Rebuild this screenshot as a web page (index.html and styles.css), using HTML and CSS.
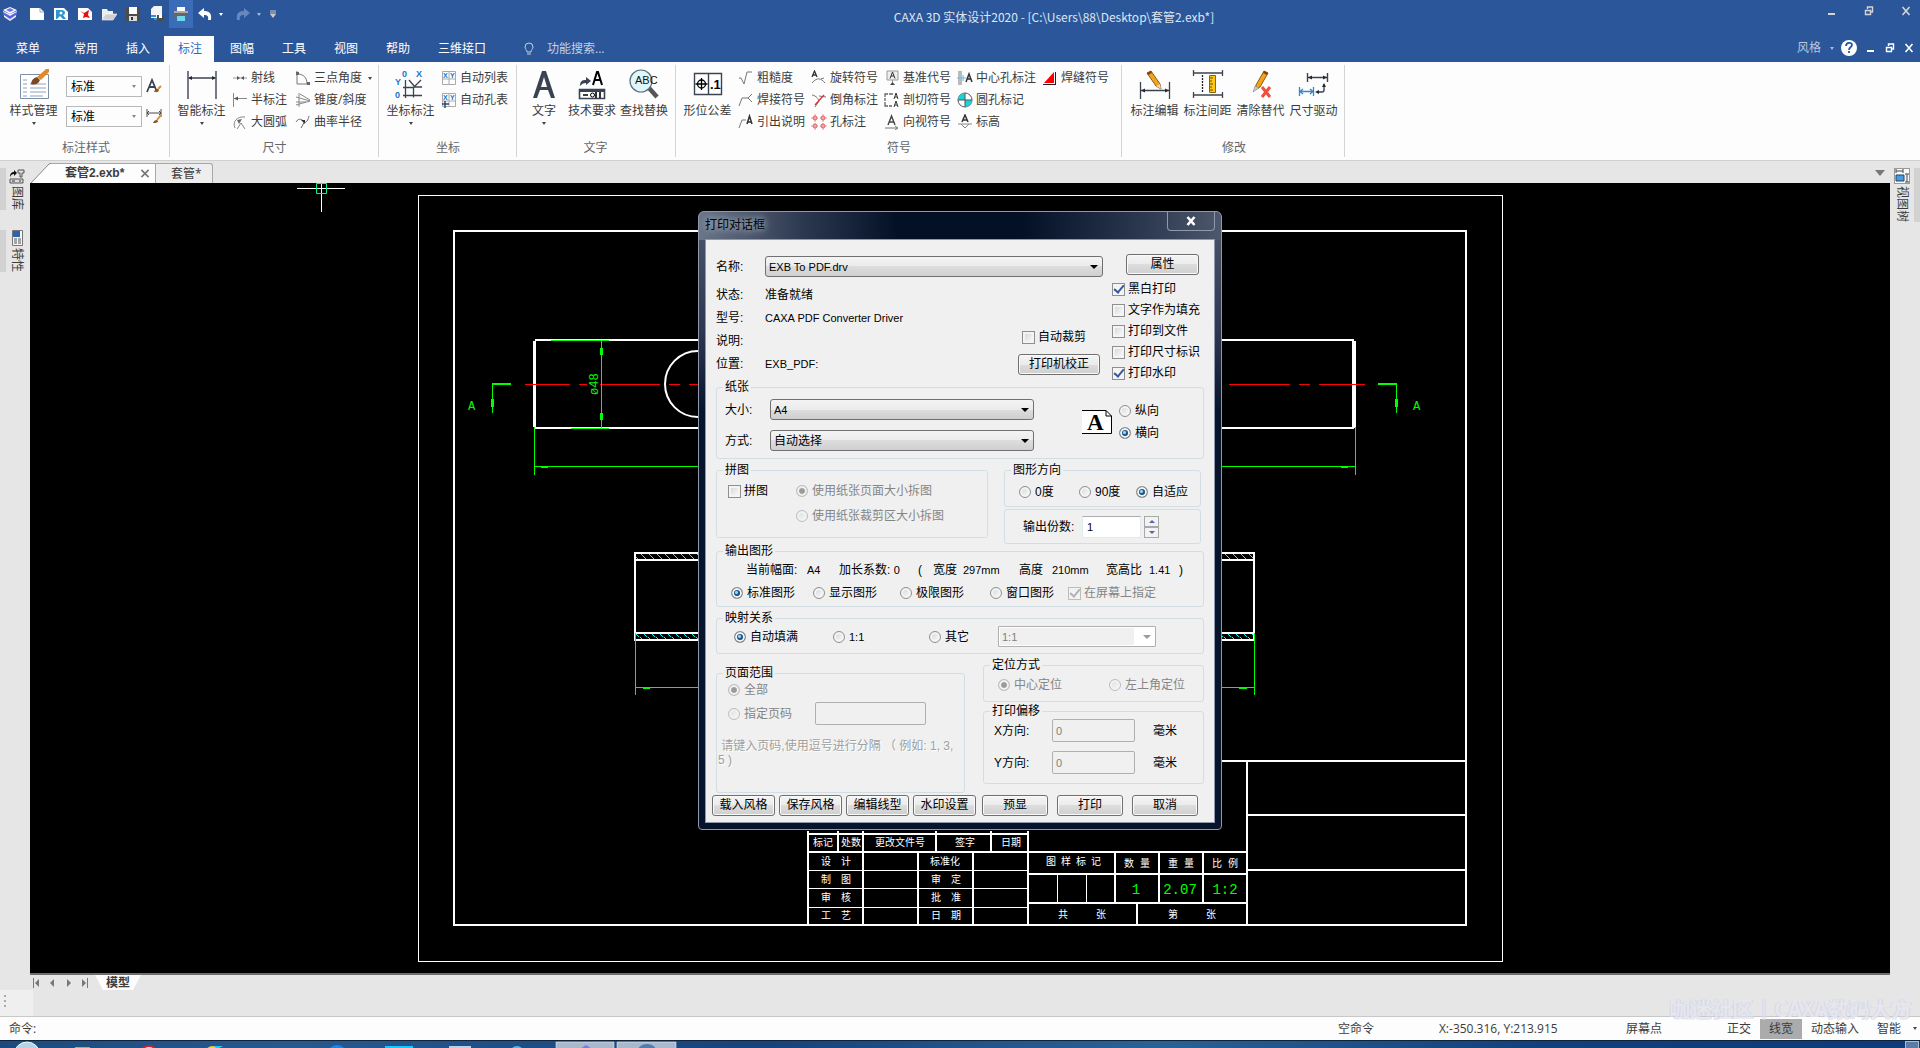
FILE: index.html
```html
<!DOCTYPE html>
<html lang="zh-CN">
<head>
<meta charset="utf-8">
<title>CAXA 3D 实体设计2020</title>
<link rel="stylesheet" href="styles.css">
</head>
<body>
<header class="header">
  <div class="titlebar">
    <div class="quick">
      <svg class="logo" viewBox="0 0 16 16"><path d="M1 4 8 1l7 3-7 4z" fill="#fff"/><path d="M4 4l4-2 4 2-4 2z" fill="#6d74ef"/><path d="M1 6l7 4 7-4v3l-7 4-7-4z" fill="#5a60e6"/><path d="M1 5v1l7 4 7-4v-1l-7 3zM2 9l6 4 6-4v2l-6 4-6-4z" fill="#e9ebff"/></svg>
      <button class="qbtn" aria-label="新建"><svg viewBox="0 0 16 16"><path d="M1 2h10l4 4v8H1z" fill="#fff"/><path d="M11 2v4h4" fill="none" stroke="#aaa"/></svg></button>
      <button class="qbtn" aria-label="新建图纸"><svg viewBox="0 0 16 16"><path d="M1 2h10l4 4v8H1z" fill="#fff"/><path d="M3 4h5q4 0 4 3 0 2-2 2l3 4h-3l-3-3-3 3H3z" fill="#2b95cf"/><circle cx="8" cy="7" r="1.500" fill="#fff"/></svg></button>
      <button class="qbtn" aria-label="新建零件"><svg viewBox="0 0 16 16"><path d="M1 2h10l4 4v8H1z" fill="#fff"/><path d="M3 5l4 2 5-3-1 5 2 3-4-1-3 1 1-4z" fill="#e01212"/></svg></button>
      <button class="qbtn" aria-label="打开"><svg viewBox="0 0 16 16"><path d="M1 14V3h5l1 2h5v3H5z" fill="#eee"/><path d="M1 14l4-6h11l-4 6z" fill="#cfcfcf" stroke="#fff" stroke-width=".6"/></svg></button>
      <button class="qbtn" aria-label="保存"><svg viewBox="0 0 16 16"><path d="M1 1h14v14H1z" fill="#4c4c4c"/><path d="M4 1h8v7H4z" fill="#fff"/><path d="M4 10h8v5H4z" fill="#ddd"/><path d="M6 11h2v3H6z" fill="#333"/></svg></button>
      <button class="qbtn" aria-label="另存"><svg viewBox="0 0 16 16"><path d="M5 0h8v12H2V3z" fill="#f5f5f5"/><path d="M2 10h5M5 13h3" stroke="#2b95cf" stroke-width="2"/><path d="M8 9h7v6H8z" fill="#4c4c4c"/><path d="M10 9h3v3h-3z" fill="#fff"/></svg></button>
      <button class="qbtn lit" aria-label="打印"><svg viewBox="0 0 16 16"><path d="M4 1h8v5H4z" fill="#fff"/><path d="M1 5h14v7H1z" fill="#666"/><path d="M1 5h14v2H1z" fill="#aaa"/><path d="M4 10h8v5H4z" fill="#6fd6f0"/></svg></button>
      <button class="qbtn" aria-label="撤销"><svg viewBox="0 0 16 16"><path d="M7 2v3c5 0 8 2 7 9h-3c1-4-1-5-4-5v3L1 7z" fill="#fff"/></svg></button>
      <span class="caret white"></span>
      <button class="qbtn" aria-label="重做"><svg viewBox="0 0 16 16"><path d="M9 2v3c-5 0-8 2-7 9h3c-1-4 1-5 4-5v3l6-5z" fill="#6787bd"/></svg></button>
      <span class="caret pale"></span>
      <svg class="more" viewBox="0 0 8 8"><path d="M1 1h6M1 3h6" stroke="#cfc8c0"/><path d="M1 4h6L4 8z" fill="#cfc8c0"/></svg>
    </div>
    <h1 class="apptitle">CAXA 3D 实体设计2020 - [C:\Users\88\Desktop\套管2.exb*]</h1>
    <div class="winctl">
      <button aria-label="最小化"><svg viewBox="0 0 10 10"><path d="M1 7h7v2H1z" fill="#d5d5d5"/></svg></button>
      <button aria-label="还原"><svg viewBox="0 0 10 10"><path d="M3.500 3V1h5v5H7M1.500 4.500h5v4h-5z" fill="none" stroke="#d5d5d5" stroke-width="1.400"/></svg></button>
      <button aria-label="关闭"><svg viewBox="0 0 10 10"><path d="M1.500 1l7 8M8.500 1l-7 8" stroke="#d5d5d5" stroke-width="1.600"/></svg></button>
    </div>
  </div>
  <nav class="tabs">
    <button class="tab file">菜单</button><button class="tab">常用</button><button class="tab">插入</button><button class="tab on">标注</button><button class="tab">图幅</button><button class="tab">工具</button><button class="tab">视图</button><button class="tab">帮助</button><button class="tab">三维接口</button>
    <label class="search"><svg viewBox="0 0 12 14"><path d="M4 10c0-2-2-3-2-5a4 4 0 0 1 8 0c0 2-2 3-2 5zM4 12h4" fill="none" stroke="#c6d0e0"/></svg><input type="text" placeholder="功能搜索..."></label>
    <div class="tabright">
      <button class="style">风格</button><span class="caret pale"></span>
      <button aria-label="帮助"><svg class="help" viewBox="0 0 16 16"><circle cx="8" cy="8" r="8" fill="#fff"/><path d="M5 6c0-4 6-4 6-1 0 2-3 2-3 5M8 11v2" fill="none" stroke="#2b579a" stroke-width="1.800"/></svg></button>
      <button aria-label="最小化文档"><svg viewBox="0 0 10 10"><path d="M1 7h7v2H1z" fill="#fff"/></svg></button>
      <button aria-label="还原文档"><svg viewBox="0 0 10 10"><path d="M3.500 3V1h5v5H7M1.500 4.500h5v4h-5z" fill="none" stroke="#fff" stroke-width="1.400"/></svg></button>
      <button aria-label="关闭文档"><svg viewBox="0 0 10 10"><path d="M1.500 1l7 8M8.500 1l-7 8" stroke="#fff" stroke-width="1.600"/></svg></button>
    </div>
  </nav>
</header>

<section class="ribbon">
  <div class="group g1">
    <div class="tools">
      <button class="big"><svg viewBox="0 0 32 32"><path d="M2.500 6.500h28v24h-28z" fill="#fff" stroke="#7d8fa6"/><path d="M5 12h4M5 16h4M5 20h4M5 24h4M5 28h4M12 16h16M12 20h16M12 24h16M12 28h13" stroke="#8aa0c0"/><path d="M13 16c1-6 4-6 6-7l3 3c-2 5-6 5-9 4z" fill="#7a4a20"/><path d="M19 9 28 1h3v3l-8 8z" fill="#e08a2c"/></svg>样式管理<span class="caret"></span></button>
      <div class="combos">
        <span class="combo"><select aria-label="文字样式"><option>标准</option></select></span>
        <span class="combo"><select aria-label="尺寸样式"><option>标准</option></select></span>
      </div>
      <div class="combos icons">
        <button aria-label="文本风格"><svg viewBox="0 0 16 16"><path d="M1 14 6 2l5 12M3 9h6" fill="none" stroke="#3c4450" stroke-width="1.800"/><path d="M8 14c1-3 3-3 4-3l1 1c0 2-3 2-5 2z" fill="#8b5a2b"/><path d="M12 11l3-3" stroke="#e08a2c" stroke-width="2"/></svg></button>
        <button aria-label="尺寸风格"><svg viewBox="0 0 16 16"><path d="M1 1v8M15 1v8M1 5h14M3 3 1 5l2 2M13 3l2 2-2 2" fill="none" stroke="#4a4a4a"/><path d="M7 15c1-3 3-3 4-3l1 1c0 2-3 2-5 2z" fill="#8b5a2b"/><path d="M11 12l4-5" stroke="#e08a2c" stroke-width="2"/></svg></button>
      </div>
    </div>
    <h2>标注样式</h2>
  </div>
  <div class="group g2">
    <div class="tools">
      <button class="big"><svg viewBox="0 0 32 32"><path d="M2 3v28M30 3v28M3 10h26" stroke="#3c4350" stroke-width="1.400"/><path d="M2 10l4-2v4zM30 10l-4-2v4z" fill="#222a36"/></svg>智能标注<span class="caret"></span></button>
      <div class="col">
        <button><svg viewBox="0 0 16 16"><path d="M1 8h14" stroke="#999"/><path d="M5 6l3 2-3 2zM12 6l-3 2 3 2z" fill="#555"/></svg>射线</button>
        <button><svg viewBox="0 0 16 16"><path d="M1.500 1v14M2 6.500h13" stroke="#888"/><path d="M2 6.500l4-2v4z" fill="#555"/></svg>半标注</button>
        <button><svg viewBox="0 0 16 16"><path d="M3 14C0 8 5 2 13 3M5 15l4-6M9 9l4 6" fill="none" stroke="#888"/><path d="M5 6l5-1-3 5z" fill="#666"/></svg>大圆弧</button>
      </div>
      <div class="col">
        <button><svg viewBox="0 0 16 16"><path d="M2 1v13h13M2 4c7 0 10 4 10 10" fill="none" stroke="#777"/><path d="M1 2h3v3H1zM12 12h3v3h-3z" fill="#666"/></svg>三点角度<span class="caret"></span></button>
        <button><svg viewBox="0 0 16 16"><path d="M4 1v14M1 5l14 4-14 4M5 2l10 6M1 10h10" fill="none" stroke="#888"/></svg>锥度/斜度</button>
        <button><svg viewBox="0 0 16 16"><path d="M1 8c3-5 7-2 8 0s4-1 5-6M6 14l4-7" fill="none" stroke="#666"/><path d="M6 6h4v4z" fill="#333"/></svg>曲率半径</button>
      </div>
    </div>
    <h2>尺寸</h2>
  </div>
  <div class="group g3">
    <div class="tools">
      <button class="big"><svg viewBox="0 0 32 32"><g stroke="#3c4350" fill="none" stroke-width="1.300"><path d="M10.500 12v18M8 27.500h19M8 19.500h10.500L26 12M14 12l6 7h7M18.500 19.500v10"/></g><g fill="#1377c9" font-size="9" font-weight="700" class="latin"><text x="7" y="9">0</text><text x="21" y="9">X</text><text x="0" y="17">Y</text><text x="0" y="30">0</text></g></svg>坐标标注<span class="caret"></span></button>
      <div class="col">
        <button><svg viewBox="0 0 16 16"><path d="M1.500 1.500h13v13h-13zM8 2v12M2 9h12" fill="none" stroke="#aaa"/><g fill="#1377c9" font-size="7" font-weight="700" class="latin"><text x="2" y="8">X</text><text x="9" y="8">Y</text></g></svg>自动列表</button>
        <button><svg viewBox="0 0 16 16"><path d="M1.500 1.500h13v13h-13zM8 2v12M2 9h12" fill="none" stroke="#aaa"/><g fill="#1377c9" font-size="7" font-weight="700" class="latin"><text x="2" y="8">X</text><text x="9" y="8">Y</text></g><path d="M4 9v7M1 12h7" stroke="#284a78" stroke-width="1.500"/></svg>自动孔表</button>
      </div>
    </div>
    <h2>坐标</h2>
  </div>
  <div class="group g4">
    <div class="tools">
      <button class="big"><svg viewBox="0 0 32 32"><path d="M5 30 14 3h4l9 27h-4l-3-8h-8l-3 8zM13 19h6l-3-10z" fill="#3c4350"/></svg>文字<span class="caret"></span></button>
      <button class="big"><svg viewBox="0 0 32 32"><path d="M4 18c0-5 2-6 6-6V9l5 4-5 4v-2c-3 0-4 1-6 3z" fill="#3c4350"/><path d="M17 17l4-13h1l4 13M18.500 12h6" fill="none" stroke="#000" stroke-width="2"/><path d="M3.500 21.500h25v9h-25z" fill="#fff" stroke="#3c4350" stroke-width="1.600"/><path d="M3 21h26v3H3z" fill="#3c4350"/><path d="M7 27h5M20 24v6M24 24v6" stroke="#000" stroke-width="1.600"/><circle cx="16.500" cy="27" r="2" fill="none" stroke="#000"/></svg>技术要求</button>
      <button class="big"><svg viewBox="0 0 32 32"><path d="M21 20l8 9" stroke="#555" stroke-width="4.500"/><circle cx="13" cy="13" r="11" fill="#dff6fb" stroke="#5a7078" stroke-width="1.200"/><text x="7" y="16" font-size="11" class="latin" fill="#111">ABC</text></svg>查找替换</button>
    </div>
    <h2>文字</h2>
  </div>
  <div class="group g5">
    <div class="tools">
      <button class="big"><svg viewBox="0 0 32 32"><path d="M2.500 5.500h27v21h-27zM16.500 6v20" fill="#fff" stroke="#3c4350" stroke-width="1.400"/><circle cx="9.500" cy="16" r="4" fill="none" stroke="#000" stroke-width="1.300"/><path d="M9.500 10v12M3.500 16h12" stroke="#000" stroke-width="1.300"/><text x="18" y="21" font-size="13" font-weight="700" class="latin">.1</text></svg>形位公差</button>
      <div class="col">
        <button><svg viewBox="0 0 16 16"><path d="M1 8h2l3 6L9 2h5" fill="none" stroke="#777"/></svg>粗糙度</button>
        <button><svg viewBox="0 0 16 16"><path d="M1 14 4 6h6l4-4M10 6l4 4" fill="none" stroke="#777"/></svg>焊接符号</button>
        <button><svg viewBox="0 0 16 16"><path d="M1 14 4 6h4" fill="none" stroke="#777"/><path d="M9 10l2.500-8L14 10M10 8h3" fill="none" stroke="#333" stroke-width="1.500"/></svg>引出说明</button>
      </div>
      <div class="col">
        <button><svg viewBox="0 0 16 16"><path d="M1 7l2.500-6L6 7M2 5h3" fill="none" stroke="#333" stroke-width="1.300"/><path d="M1 13c5-6 9-5 13 0M10 9l3-1" fill="none" stroke="#777"/></svg>旋转符号</button>
        <button><svg viewBox="0 0 16 16"><path d="M1 3c5 1 6 4 7 6l-4 6M8 4l7 1" fill="none" stroke="#777"/><path d="M4 13 13 3" stroke="#e03030" stroke-width="1.300"/></svg>倒角标注</button>
        <button><svg viewBox="0 0 16 16"><g fill="none" stroke="#dd5a5a"><circle cx="4" cy="4" r="2"/><circle cx="12" cy="4" r="2"/><circle cx="4" cy="12" r="2"/><circle cx="12" cy="12" r="2"/><path d="M4 0v8M12 0v8M4 9v7M12 9v7M0 4h7M9 4h7M0 12h7M9 12h7" opacity=".6"/></g></svg>孔标注</button>
      </div>
      <div class="col">
        <button><svg viewBox="0 0 16 16"><path d="M3 1h11v9H3zM8.500 10v4" fill="#eee" stroke="#999"/><path d="M6 8.500 8.500 2 11 8.500M7 6h3" fill="none" stroke="#333"/><path d="M6 15l2.500-3L11 15z" fill="#444"/></svg>基准代号</button>
        <button><svg viewBox="0 0 16 16"><path d="M4 2H1v3M1 10v4h3M5 2h3M5 14h3M8 2h1M1 6v3" fill="none" stroke="#666" stroke-width="1.300"/><path d="M10 7l2-6 2 6M10 15l2-6 2 6M11 5h2M11 13h2" fill="none" stroke="#333"/></svg>剖切符号</button>
        <button><svg viewBox="0 0 16 16"><path d="M4 11 7.500 2 11 11M5 8h5" fill="none" stroke="#444" stroke-width="1.400"/><path d="M1 14h13M11 12l3 2-3 2" fill="none" stroke="#777"/></svg>向视符号</button>
      </div>
      <div class="col">
        <button><svg viewBox="0 0 16 16"><path d="M1 1h4v14H1z" fill="#bbb"/><path d="M0 8h9M6 5v6" stroke="#6fb6e0"/><path d="M9 12l3-8 3 8M10 9h4" fill="none" stroke="#333" stroke-width="1.500"/></svg>中心孔标注</button>
        <button><svg viewBox="0 0 16 16"><circle cx="8" cy="8" r="7" fill="#fff" stroke="#555"/><path d="M8 8V1a7 7 0 0 0-7 7zM8 8v7a7 7 0 0 0 7-7z" fill="#18d4dc"/><path d="M8 1v14M1 8h14" stroke="#555"/></svg>圆孔标记</button>
        <button><svg viewBox="0 0 16 16"><path d="M5 8l3-7 3 7M6 6h4" fill="none" stroke="#333" stroke-width="1.500"/><path d="M1 10h14M4 10l4 4 4-4" fill="none" stroke="#888"/></svg>标高</button>
      </div>
      <div class="col">
        <button><svg viewBox="0 0 16 16"><path d="M2 13 12 2v11z" fill="#f00"/><path d="M1 14.500h13M13.500 2v13" stroke="#222"/></svg>焊缝符号</button>
      </div>
    </div>
    <h2>符号</h2>
  </div>
  <div class="group g6">
    <div class="tools">
      <button class="big"><svg viewBox="0 0 32 32"><path d="M1.500 14v17M30.500 14v17M2 22.500h28" stroke="#3c4350" stroke-width="1.300"/><path d="M2 22.500l4-2v4zM30 22.500l-4-2v4z" fill="#222a36"/><path d="M8 5l4-2 9 13 1 5-5-3z" fill="#f2a51c" stroke="#8a5a14"/><path d="M8 5l4-2 1 2-4 2z" fill="#8b3c14"/><path d="M17 18l4-2 1 5z" fill="#e8d8b8"/></svg>标注编辑</button>
      <button class="big"><svg viewBox="0 0 32 32"><path d="M1.500 2v6M30.500 2v6M2 5h28M1.500 24v6M30.500 24v6M2 27h28" stroke="#3c4350" stroke-width="1.300"/><path d="M10.500 7v17" stroke="#222" stroke-width="1.300" stroke-dasharray="2 1"/><path d="M17.500 7.500h6v17h-6z" fill="#ffc814" stroke="#8a6a00"/><path d="M18 10h3M18 13h2M18 16h3M18 19h2M18 22h3" stroke="#6a4c00"/></svg>标注间距</button>
      <button class="big"><svg viewBox="0 0 32 32"><path d="M19 3l4 2-8 14-5 3 1-5z" fill="#f2a51c" stroke="#8a5a14"/><path d="M19 3l4 2-1 2-4-2z" fill="#8b3c14"/><path d="M10 18l4 2-6 4z" fill="#ccc" stroke="#777" stroke-width=".5"/><path d="M17 19l8 10M25 19l-8 10" stroke="#f0503c" stroke-width="3"/></svg>清除替代</button>
      <button class="big"><svg viewBox="0 0 32 32"><path d="M9.500 5v9M29.500 5v9M10 9.500h19M26 16v6q0 2-2 2h-5" fill="none" stroke="#3c4350" stroke-width="1.400"/><path d="M10 9.500l4-2v4zM29 9.500l-4-2v4zM26 15l-2 4h4zM17 24l4-2v4z" fill="#222a36"/><path d="M1.500 19v9M15.500 19v9M2 23.500h13M5 21l-3 2.500L5 26M12 21l3 2.500-3 2.500" fill="none" stroke="#3a86c8" stroke-width="1.300"/></svg>尺寸驱动</button>
    </div>
    <h2>修改</h2>
  </div>
</section>

<main class="work">
  <aside class="dock left">
    <button class="docktab"><svg viewBox="0 0 16 16"><path d="M1 9c0-4 2-5 4-5V2l3 3-3 3V6C3 6 2 7 1 9z" fill="#111"/><path d="M9 2h6v3h-2v4h-2V5H9zM1 11h13v4H1z" fill="#ddd" stroke="#555"/><path d="M3 13h3M10 13h2" stroke="#333"/></svg><span>图库</span></button>
    <button class="docktab"><svg viewBox="0 0 16 16"><path d="M3.500.5h10v15h-10z" fill="#f5f5f5" stroke="#777"/><path d="M4 1h7v6H4z" fill="#2a66b0"/><path d="M5 9h3M9 9h3M5 11h3M9 11h3M5 13h3M9 13h3" stroke="#555"/></svg><span>特性</span></button>
  </aside>
  <div class="center">
    <div class="doctabs">
      <button class="doctab on"><svg class="slope" viewBox="0 0 20 20" preserveAspectRatio="none"><path d="M0 20 18 1Q19 .5 20 .5V20z" fill="#fdfdfd"/><path d="M0 20 18 1Q19 .5 20 .5" fill="none" stroke="#8a8a8a"/></svg><span class="docname">套管2.exb*</span><svg class="x" viewBox="0 0 10 10"><path d="M1 1l8 8M9 1 1 9" stroke="#777" stroke-width="1.800"/></svg></button><button class="doctab">套管*</button>
      <span class="caret tabmenu"></span>
    </div>
    <div class="canvas">
      <svg class="drawing" viewBox="30 183 1860 790">
        <defs><pattern id="hatch" width="8" height="7" patternUnits="userSpaceOnUse" y="553"><path d="M0 0l7 7" stroke="#0ff" fill="none"/></pattern></defs>
        <g fill="none" stroke="#fff" shape-rendering="crispEdges">
          <path d="M418.500 195.500h1084v766h-1084z"/>
          <path d="M297 188.500h48M321.500 183v29"/>
          <path d="M454 231h1012v694h-1012zM535 340h819M535 428h819" stroke-width="2"/>
          <path d="M534.500 341v86" stroke-width="3"/><path d="M1354 341v87" stroke-width="4"/>
          <path d="M635 553h619v87h-619zM635 560h619M635 633h619" stroke-width="2"/>
          <path d="M808 834h220M808 831v94M838 831v21M863 831v94M936 831v21M991 831v21M1028 831v94M808 852h439M918 852v73M973 852v73M1028 874h219M1115 852v51M1159 852v51M1203 852v51M1028 903h219M1137 903v22M1247 761v164M1222 761h244M1247 815h219M1247 870h219" stroke-width="2"/>
          <path d="M808 870.500h220M808 888.500h220M808 907.500h220M1057.500 874v29M1086.500 874v29"/>
        </g>
        <circle cx="698" cy="384" r="33" fill="none" stroke="#fff" stroke-width="2"/>
        <path d="M636 554h617v5h-617zM636 634h617v5h-617z" fill="url(#hatch)"/>
        <path d="M525 384.500h45M579 384.500h8M600 384.500h60M669 384.500h11M689 384.500h10M1229 384.500h61M1299 384.500h11M1319 384.500h46" stroke="#f00" shape-rendering="crispEdges"/>
        <g fill="none" stroke="#0f0" shape-rendering="crispEdges">
          <path d="M492.500 383v30M1396.500 383v30M551 340.500h58M571 428.500h38M601.500 341v87M534.500 427v48M534 466.500h821M1355.500 427v48M635.500 633v62M635 687.500h619M1254.500 633v62"/>
          <path d="M492 384h19M1378 384h19M541 467h7M1341 467h7M643 688h7M1239 688h8" stroke-width="2"/>
          <path d="M601.500 348v7M601.500 413v7M492.500 399v8M1396.500 399v8" stroke-width="3"/>
        </g>
        <path d="M316.500 183.500h10v10h-10z" fill="none" stroke="#00ff7f"/>
        <g class="cad green"><text x="468" y="410">A</text><text x="1413" y="410">A</text><text transform="translate(598 395) rotate(-90)">ø48</text></g>
        <g class="cad num"><text x="1136" y="894">1</text><text x="1180" y="894">2.07</text><text x="1225" y="894">1:2</text></g>
        <g class="cad cjk">
          <text x="823" y="846">标记</text><text x="851" y="846">处数</text><text x="900" y="846">更改文件号</text><text x="965" y="846">签字</text><text x="1011" y="846">日期</text>
          <text x="826 846" y="865">设计</text><text x="826 846" y="883">制图</text><text x="826 846" y="901">审核</text><text x="826 846" y="919">工艺</text>
          <text x="945" y="865">标准化</text><text x="936 956" y="883">审定</text><text x="936 956" y="901">批准</text><text x="936 956" y="919">日期</text>
          <text x="1051 1066 1081 1096" y="865">图样标记</text><text x="1129 1145" y="867">数量</text><text x="1173 1189" y="867">重量</text><text x="1217 1233" y="867">比例</text>
          <text x="1063 1101" y="918">共张</text><text x="1173 1211" y="918">第张</text>
        </g>
      </svg>

      <form class="dialog" onsubmit="return false">
        <div class="dlgtitle"><span>打印对话框</span><button type="button" class="dlgclose" aria-label="关闭"><svg viewBox="0 0 12 10"><path d="M2.500 1l7 8M9.500 1l-7 8" stroke="#fff" stroke-width="2.600"/></svg></button></div>
        <div class="client">
          <div class="top">
            <div class="info">
              <div class="namerow"><label for="prn">名称:</label><span class="pick grow"><select id="prn" class="en"><option>EXB To PDF.drv</option></select></span></div>
              <div class="infolow">
                <dl><dt>状态:</dt><dd>准备就绪</dd><dt>型号:</dt><dd class="en">CAXA PDF Converter Driver</dd><dt>说明:</dt><dd></dd><dt>位置:</dt><dd class="en">EXB_PDF:</dd></dl>
                <div class="calib"><label class="opt"><input type="checkbox">自动裁剪</label><button type="button" class="btn">打印机校正</button></div>
              </div>
            </div>
            <div class="flags">
              <button type="button" class="btn">属性</button>
              <label class="opt"><input type="checkbox" checked>黑白打印</label>
              <label class="opt"><input type="checkbox">文字作为填充</label>
              <label class="opt"><input type="checkbox">打印到文件</label>
              <label class="opt"><input type="checkbox">打印尺寸标识</label>
              <label class="opt"><input type="checkbox" checked>打印水印</label>
            </div>
          </div>

          <fieldset class="paper"><legend>纸张</legend>
            <div class="paperbody">
              <div class="sizes">
                <label for="size">大小:</label><span class="pick"><select id="size" class="en"><option>A4</option></select></span>
                <label for="mode">方式:</label><span class="pick"><select id="mode"><option>自动选择</option></select></span>
              </div>
              <svg class="page" viewBox="0 0 30 24"><path d="M0 .5h24l5.500 5.500v17.500H0" fill="#fff" stroke="#000"/><path d="M24 .5V6h5.500" fill="none" stroke="#000"/><text x="5" y="20" class="serif">A</text></svg>
              <div class="orient"><label class="opt"><input type="radio" name="ori">纵向</label><label class="opt"><input type="radio" name="ori" checked>横向</label></div>
            </div>
          </fieldset>

          <div class="pair">
            <fieldset class="tile"><legend>拼图</legend>
              <div class="tilebody"><label class="opt"><input type="checkbox">拼图</label>
              <div class="stack"><label class="opt off"><input type="radio" name="tile" checked disabled>使用纸张页面大小拆图</label><label class="opt off"><input type="radio" name="tile" disabled>使用纸张裁剪区大小拆图</label></div></div>
            </fieldset>
            <div class="rightcol">
              <fieldset class="rot"><legend>图形方向</legend><div class="rotbody"><label class="opt"><input type="radio" name="rot">0度</label><label class="opt"><input type="radio" name="rot">90度</label><label class="opt"><input type="radio" name="rot" checked>自适应</label></div></fieldset>
              <div class="copies"><label for="copies">输出份数:</label><input id="copies" type="text" value="1"><span class="spin"><button type="button" aria-label="增加"></button><button type="button" aria-label="减少"></button></span></div>
            </div>
          </div>

          <fieldset class="output"><legend>输出图形</legend>
            <div class="facts"><span>当前幅面:</span><span class="en">A4</span><span>加长系数: <span class="en">0</span></span><span>(</span><span>宽度</span><span class="en">297mm</span><span>高度</span><span class="en">210mm</span><span>宽高比</span><span class="en">1.41</span><span>)</span></div>
            <div class="ranges"><label class="opt"><input type="radio" name="out" checked>标准图形</label><label class="opt"><input type="radio" name="out">显示图形</label><label class="opt"><input type="radio" name="out">极限图形</label><label class="opt"><input type="radio" name="out">窗口图形</label><label class="opt off"><input type="checkbox" checked disabled>在屏幕上指定</label></div>
          </fieldset>

          <fieldset class="map"><legend>映射关系</legend>
            <div class="mapbody"><label class="opt"><input type="radio" name="map" checked>自动填满</label><label class="opt"><input type="radio" name="map"><span class="en">1:1</span></label><label class="opt"><input type="radio" name="map">其它</label><span class="pick dim"><select class="en" disabled aria-label="比例"><option>1:1</option></select></span></div>
          </fieldset>

          <div class="pair last">
            <fieldset class="pages"><legend>页面范围</legend>
              <label class="opt off"><input type="radio" name="pg" checked disabled>全部</label>
              <div class="pgrow"><label class="opt off"><input type="radio" name="pg" disabled>指定页码</label><input type="text" disabled aria-label="页码"></div>
              <p>&nbsp;请键入页码,使用逗号进行分隔 （ 例如: 1, 3, 5 )</p>
            </fieldset>
            <div class="poscol">
              <fieldset class="pos"><legend>定位方式</legend><div class="posbody"><label class="opt off"><input type="radio" name="pos" checked disabled>中心定位</label><label class="opt off"><input type="radio" name="pos" disabled>左上角定位</label></div></fieldset>
              <fieldset class="shift"><legend>打印偏移</legend><div class="shiftbody"><label for="ox">X方向:</label><input id="ox" type="text" value="0" disabled><span>毫米</span><label for="oy">Y方向:</label><input id="oy" type="text" value="0" disabled><span>毫米</span></div></fieldset>
            </div>
          </div>

          <div class="buttons"><div class="presets"><button type="button" class="btn">载入风格</button><button type="button" class="btn">保存风格</button><button type="button" class="btn">编辑线型</button><button type="button" class="btn">水印设置</button></div><div class="actions"><button type="button" class="btn">预显</button><button type="button" class="btn">打印</button><button type="button" class="btn">取消</button></div></div>
        </div>
      </form>
    </div>
    <div class="sheets">
      <button aria-label="第一页"><svg viewBox="0 0 10 10"><path d="M1 0h1v10H1zM7 1v8L3 5z" fill="#777"/></svg></button>
      <button aria-label="上一页"><svg viewBox="0 0 10 10"><path d="M6 1v8L2 5z" fill="#777"/></svg></button>
      <button aria-label="下一页"><svg viewBox="0 0 10 10"><path d="M3 1v8l4-4z" fill="#777"/></svg></button>
      <button aria-label="最后一页"><svg viewBox="0 0 10 10"><path d="M2 1v8l4-4zM7 0h1v10H7z" fill="#777"/></svg></button>
      <button class="model">模型</button>
    </div>
  </div>
  <aside class="dock right">
    <button class="docktab"><svg viewBox="0 0 16 16"><path d="M.5.5h15v15H.500z" fill="#fafafa" stroke="#444" stroke-dasharray="1 1"/><path d="M2 3h7M2 1v4M9 1v4M13 6v8M11 6h4M11 14h4" stroke="#444"/><path d="M2 7h8v6H2z" fill="#4a9be0" stroke="#246"/></svg><span>视图树</span></button>
  </aside>
</main>
<div class="griprow"><span class="grip"></span></div>
<footer class="status">
  <label for="cmd" class="cmdlabel">命令:</label><input id="cmd" class="cmd" type="text">
  <span class="s1">空命令</span><span class="s2">X:-350.316, Y:213.915</span><span class="s3">屏幕点</span>
  <button>正交</button><button class="held">线宽</button><button>动态输入</button><button class="snap">智能<span class="caret"></span></button>
  <span class="mark">咖迷社区｜CAXA数码大方</span>
</footer>
<div class="taskbar">
  <svg viewBox="0 0 700 8"><circle cx="27" cy="14" r="13" fill="#b9d2e6" stroke="#dff"/><path d="M75 6h15v2H75z" fill="#b5a577"/><circle cx="149" cy="14" r="9" fill="#e8e8f0" stroke="#d02030" stroke-width="2"/><circle cx="213" cy="14" r="9" fill="#ffd21c"/><path d="M213 5h10l-5 3z" fill="#28c3e8"/><circle cx="337" cy="14" r="10" fill="#1c86e8"/><path d="M385 5h28v3h-28z" fill="#0a2540"/><path d="M385 5h28v2h-28z" fill="#18c8ff"/><path d="M449 5h22v3h-22z" fill="#b9d0e6"/><circle cx="517" cy="12" r="7" fill="#5db4dc"/><path d="M556 1h58v7h-58zM617 1h59v7h-59z" fill="#a9b8cc" stroke="#fff" stroke-width=".5"/><path d="M580 8l6-4 6 4z" fill="#7a7ae8"/><circle cx="647" cy="14" r="11" fill="#4f7db0"/></svg>
  <span class="showdesk"></span>
</div>
</body>
</html>
```
FILE: styles.css
```css
* { box-sizing: border-box; }
body {
  margin: 0; height: 100vh; display: flex; flex-direction: column; overflow: hidden;
  background: #e6e6e6; color: #3c3c3c;
  font: 12px/16px "Open Sans", "Noto Sans CJK SC", sans-serif;
}
button, input, select { font: inherit; color: inherit; margin: 0; padding: 0; border: 0; background: none; }
button { cursor: default; }
svg { display: block; flex: none; }
h1, h2 { margin: 0; font-size: 12px; font-weight: 400; }
.latin { font-family: "Liberation Sans", sans-serif; }
.caret { width: 0; height: 0; border: 2px solid transparent; border-top: 3px solid #444; border-bottom: 0; }
.caret.white { border-top-color: #fff; }
.caret.pale { border-top-color: #a9b8d3; }

/* title bar and tabs */
.header { background: #2b579a; color: #fff; height: 62px; flex: none; display: flex; flex-direction: column; }
.titlebar { height: 36px; display: grid; grid-template-columns: auto 1fr auto; align-items: start; }
.quick { display: flex; align-items: center; height: 28px; padding-left: 2px; }
.quick .logo { width: 16px; height: 16px; margin-right: 7px; }
.qbtn { width: 24px; height: 28px; display: flex; align-items: center; justify-content: center; }
.qbtn svg { width: 16px; height: 16px; }
.qbtn.lit { background: #3a6cb8; }
.quick .caret { margin: 0 8px 0 2px; }
.quick .more { width: 8px; height: 8px; }
.apptitle { padding: 9px 0 0 4px; color: #dfe6f1; white-space: nowrap; text-align: center; font-family: "Noto Sans CJK SC", sans-serif; line-height: 16px; }
.winctl { justify-self: end; display: flex; gap: 27px; padding: 6px 9px 0 0; }
.winctl svg, .tabright svg { width: 10px; height: 10px; }
.tabs { display: flex; height: 26px; }
.tab { width: 52px; height: 26px; padding: 0 14px; white-space: nowrap; line-height: 24px; }
.tab:nth-child(9) { width: 76px; }
.tab.file { width: 60px; padding: 0 20px 0 16px; }
.tab.on { background: #fdfdfd; color: #2b6cc4; width: 50px; padding: 0 12px 0 14px; margin-right: 2px; }
.search { display: flex; align-items: center; gap: 12px; padding-left: 23px; height: 26px; }
.search svg { width: 12px; height: 14px; }
.search input { width: 120px; color: #c6d0e0; }
.search input::placeholder { color: #c6d0e0; opacity: 1; }
.tabright { margin-left: auto; display: flex; align-items: center; gap: 9px; padding-right: 6px; height: 24px; }
.tabright .style { color: #b8c6de; }
.tabright .caret { margin-right: -2px; }
.tabright .help { width: 16px; height: 16px; }

/* ribbon */
.ribbon { height: 99px; flex: none; display: flex; background: #fdfdfd; border-bottom: 1px solid #d0d0d0; padding: 3px 0; overflow: hidden; }
.group { flex: none; display: flex; flex-direction: column; justify-content: space-between; border-right: 1px solid #d4d4d4; }
.group h2 { text-align: center; line-height: 18px; color: #666; padding-right: 4px; }
.tools { display: flex; padding-top: 3px; }
.g1 { width: 170px; padding-left: 7px; }
.g2 { width: 209px; padding-left: 5px; }
.g3 { width: 138px; padding-left: 5px; }
.g4 { width: 159px; padding-left: 3px; }
.g5 { width: 446px; padding-left: 5px; }
.g6 { width: 223px; padding-left: 6px; }
.big { width: 53px; display: flex; flex-direction: column; align-items: center; line-height: 22px; white-space: nowrap; }
.g4 .big { width: 48px; }
.g4 .big:last-child { width: 56px; }
.big svg { width: 32px; height: 32px; }
.combos { display: flex; flex-direction: column; gap: 9px; padding: 8px 0 0 6px; }
.combos.icons { padding: 10px 0 0 4px; gap: 14px; }
.combos.icons svg { width: 16px; height: 16px; }
.combo { position: relative; width: 76px; height: 21px; border: 1px solid #b8b8b8; }
.combo select { appearance: none; width: 100%; height: 19px; padding-left: 4px; color: #000; display: block; }
.combo::after { content: ""; position: absolute; right: 5px; top: 8px; border: 2px solid transparent; border-top: 3px solid #888; }
.col { display: flex; flex-direction: column; padding-left: 6px; margin-top: -1px; }
.col button { display: flex; align-items: center; gap: 3px; height: 22px; white-space: nowrap; }
.col button svg { width: 16px; height: 16px; }
.col .caret { margin-left: 3px; }
.g2 .col, .g3 .col, .g5 .big + .col { padding-left: 4px; }
.g2 .col + .col { padding-left: 8px; }

/* work area */
.work { flex: 1; display: flex; min-height: 0; }
.dock { width: 30px; flex: none; padding-top: 7px; display: flex; flex-direction: column; gap: 20px; }
.docktab { display: flex; flex-direction: column; gap: 2px; align-items: center; border-left: 6px solid #d2d2d2; height: 42px; width: 28px; }
.docktab svg { width: 16px; height: 16px; }
.docktab span { writing-mode: vertical-rl; text-orientation: sideways; line-height: 18px; }
.dock.right .docktab { border-left: 0; border-right: 6px solid #d2d2d2; width: 30px; height: 54px; }
.center { flex: 1; min-width: 0; display: flex; flex-direction: column; }
.doctabs { height: 22px; display: flex; align-items: flex-end; padding-left: 1px; }
.doctab { height: 20px; display: flex; align-items: center; border: 1px solid #a8a8a8; border-bottom: 0; border-radius: 0 3px 0 0; background: #eee; padding: 0 10px 0 15px; }
.doctab.on { background: none; border: 0; padding: 0; font-weight: 700; }
.doctab .slope { width: 20px; height: 20px; }
.doctab .docname, .doctab .x { background: #fdfdfd; border-top: 1px solid #a8a8a8; height: 20px; line-height: 18px; }
.doctab .docname { padding-left: 14px; width: 88px; text-align: left; font-family: "Liberation Sans", "Noto Sans CJK SC", sans-serif; }
.doctab .x { width: 16px; padding: 5px 5px 5px 1px; }
.tabmenu { margin: 0 5px 7px auto; border-width: 5px; border-top: 6px solid #777; }
.canvas { flex: 1; min-height: 0; position: relative; background: #000; border-bottom: 2px solid #6e6e6e; box-sizing: content-box; }
.drawing { width: 100%; height: 100%; }
.cad { font-family: "Liberation Mono", monospace; }
.green { fill: #0f0; font-size: 12px; }
.num { fill: #0f0; font-size: 14px; text-anchor: middle; }
.cjk { fill: #fff; font-family: "Noto Sans CJK SC", sans-serif; font-size: 10px; text-anchor: middle; }
.sheets { height: 15px; flex: none; display: flex; align-items: center; gap: 6px; padding-left: 2px; }
.sheets button svg { width: 10px; height: 10px; }
.sheets .model { width: 46px; height: 15px; line-height: 14px; font-weight: 700; background: #fdfdfd; clip-path: polygon(0 0, 100% 0, 38px 100%, 8px 100%); margin-left: -1px; }

/* print dialog */
.dialog {
  position: absolute; left: calc(50% - 262px); top: 28px; width: 524px;
  border: 1px solid #8e99ac; border-radius: 6px 6px 4px 4px; padding: 0 6px 6px;
  background:
    linear-gradient(90deg, #6b7588, #2c3850 20%, #041026 38%, #041026 62%, #2c3850 85%, #4d586c) 0 0/100% 28px no-repeat,
    linear-gradient(#4d586c, #2c3850 120px, #06142c 200px);
  color: #000; font: 12px/14px "Liberation Sans", "Noto Sans CJK SC", sans-serif;
}
.dlgtitle { height: 27px; display: flex; justify-content: space-between; align-items: flex-start; }
.dlgtitle span { line-height: 20px; margin-top: 3px; text-shadow: 0 0 6px #a8b2c2, 0 0 8px #a8b2c2; }
.dlgclose { width: 48px; height: 19px; border: 1px solid #8e99ac; border-top: 0; border-radius: 0 0 4px 4px; display: grid; place-items: center; }
.dlgclose svg { width: 12px; height: 10px; }
.client { background: #f0f0f0; border: 1px solid #8e99ac; padding: 14px 10px 6px; }
.en { font-size: 11px; }
.opt { display: flex; align-items: center; gap: 3px; white-space: nowrap; line-height: 12px; height: 12px; }
.opt input { appearance: none; width: 13px; height: 13px; flex: none; border: 1px solid #8e8f8f; background: linear-gradient(135deg, #cfd3d8, #fff); box-shadow: inset 0 0 0 2px #f4f4f4; }
.opt input[type=radio] { border-radius: 50%; width: 12px; height: 12px; margin-right: 1px; }
.opt input[type=radio]:checked { background: radial-gradient(circle at 45% 45%, #8fd8f8 0 1px, #1d5f96 2px, #123a5c 4px); }
.opt input[type=checkbox]:checked { background: linear-gradient(#f0f0f0, #fff); display: grid; place-items: center; }
.opt input[type=checkbox]:checked::before { content: ""; width: 4px; height: 8px; border: solid #3b5998; border-width: 0 2px 2px 0; rotate: 40deg; margin-top: -2px; }
.opt.off { color: #858585; }
.opt.off input { opacity: .7; border-color: #a8a8a8; }
.opt.off input[type=radio]:checked { background: radial-gradient(circle, #777 0 2px, #aaa 4px); }
.opt.off input[type=checkbox]:checked::before { border-color: #999; }
.btn { height: 21px; border: 1px solid #707070; border-radius: 3px; background: linear-gradient(#f4f4f4, #ebebeb 50%, #dddddd 50%, #cfcfcf); box-shadow: inset 0 0 0 1px #fafafa; line-height: 19px; white-space: nowrap; }
.pick { position: relative; display: block; height: 21px; border: 1px solid #707070; border-radius: 3px; background: linear-gradient(#f4f4f4, #ebebeb 50%, #dddddd 50%, #cfcfcf); }
.pick select { appearance: none; width: 100%; height: 19px; padding-left: 3px; display: block; }
.pick::after { content: ""; position: absolute; right: 4px; top: 8px; border: 4px solid transparent; border-top-color: #000; border-bottom: 0; }
.pick.dim { background: #fff; border-color: #afafaf; border-radius: 1px; color: #808080; }
.pick.dim select { width: 136px; background: #f0f0f0; opacity: 1; border: 1px solid #fff; padding-left: 2px; }
.pick.dim::after { border-top-color: #999; }
.top { display: flex; justify-content: space-between; height: 125px; }
.info { width: 387px; }
.namerow { display: flex; align-items: center; height: 25px; }
.namerow label, .sizes label { line-height: 16px; }
.namerow label { width: 49px; }
.grow { flex: 1; }
.infolow { display: flex; justify-content: space-between; padding: 4px 3px 0 0; }
dl { margin: 0; display: grid; grid-template-columns: 49px auto; line-height: 24px; grid-auto-rows: 23px; }
dd { margin: 0; }
.calib { display: flex; flex-direction: column; justify-content: flex-end; gap: 11px; width: 82px; }
.calib .opt { padding-left: 4px; }
.flags { width: 92px; display: flex; flex-direction: column; gap: 9px; }
.flags .btn { width: 73px; margin: 0 0 -1px 14px; flex: none; }
fieldset { margin: 0; padding: 0; min-width: 0; border: 1px solid #d2dde4; border-radius: 3px; }
legend { margin-left: 6px; padding: 0 2px; line-height: 17px; height: 16px; }
.paper { height: 80px; }
.paperbody { display: flex; align-items: flex-start; padding: 4px 0 0 8px; }
.sizes { display: grid; grid-template-columns: 45px 264px; row-gap: 10px; align-items: center; }
.page { width: 30px; height: 24px; margin: 11px 7px 0 48px; }
.serif { font: 700 23px "Liberation Serif", serif; }
.orient { display: flex; flex-direction: column; gap: 10px; padding-top: 6px; }
.pair { display: flex; justify-content: space-between; margin-top: 3px; height: 81px; }
.tile { width: 272px; height: 76px; }
.tilebody { display: flex; gap: 28px; padding: 7px 0 0 11px; }
.stack { display: flex; flex-direction: column; gap: 13px; }
.rightcol { width: 197px; margin-right: 3px; }
.rot { height: 45px; }
.rotbody { display: grid; grid-template-columns: 60px 57px auto; padding: 8px 0 0 14px; }
.copies { margin-top: 2px; height: 35px; border: 1px solid #d2dde4; border-radius: 3px; display: flex; align-items: center; padding-left: 18px; }
.copies label { width: 59px; }
.copies input { width: 59px; height: 22px; background: #fff; border: 1px solid #e3e9ef; border-top-color: #abadb3; padding-left: 4px; font-size: 11px; }
.spin { display: flex; flex-direction: column; margin-left: 3px; }
.spin button { width: 15px; height: 11px; border: 1px solid #a8a8a8; background: #f2f2f2; display: grid; place-items: center; }
.spin button::before { content: ""; border: 3px solid transparent; border-bottom-color: #5068a8; border-top: 0; }
.spin button + button::before { border: 3px solid transparent; border-top-color: #5068a8; border-bottom: 0; }
.output { height: 64px; }
.facts { display: grid; grid-template-columns: 61px 32px 79px 15px 30px 56px 33px 54px 43px 30px auto; padding-left: 29px; line-height: 22px; white-space: nowrap; }
.ranges { display: grid; grid-template-columns: 82px 87px 90px 78px auto; padding: 6px 0 0 14px; }
.map { height: 44px; margin-top: 3px; }
.mapbody { display: grid; grid-template-columns: 99px 96px 69px 158px; align-items: center; padding-left: 17px; }
.pair.last { height: 136px; }
.pages { width: 249px; height: 128px; margin-top: 8px; }
.pages > .opt { padding-left: 11px; margin-top: 3px; }
.pgrow { display: flex; align-items: center; padding-left: 11px; margin-top: 6px; }
.pgrow .opt { width: 87px; }
.pgrow input { width: 111px; height: 23px; border: 1px solid #afafaf; border-radius: 2px; }
.pages p { margin: 14px 4px 0 1px; line-height: 14px; color: #a0a0a0; text-shadow: 1px 1px #fff; }
.poscol { width: 221px; }
.pos { height: 45px; }
.posbody { display: grid; grid-template-columns: 111px auto; padding: 6px 0 0 14px; }
.shift { height: 81px; margin-top: 1px; }
.shiftbody { display: grid; grid-template-columns: 58px 83px auto; grid-auto-rows: 23px; row-gap: 9px; align-items: center; padding-left: 10px; }
.shiftbody input { height: 23px; border: 1px solid #afafaf; border-radius: 2px; padding-left: 3px; color: #808080; font-size: 11px; }
.shiftbody span { padding-left: 18px; }
.buttons { display: flex; gap: 6px; margin: 2px 0 0 -4px; }
.presets { display: flex; gap: 4px; }
.presets .btn { width: 63px; }
.actions { display: flex; gap: 9px; }
.actions .btn { width: 66px; }

/* command line, status, taskbar */
.griprow { height: 26px; flex: none; }
.grip { display: block; width: 33px; height: 26px; background: repeating-linear-gradient(#aaa 0 2px, #efefef 2px 5px) 4px 5px/2px 15px no-repeat, #efefef; }
.status { height: 24px; flex: none; position: relative; display: flex; align-items: center; background: #fdfdfd; border-top: 1px solid #c8c8c8; white-space: nowrap; padding-left: 9px; }
.cmd { flex: 1; min-width: 0; }
.s1 { width: 101px; }
.s2 { width: 187px; }
.s3 { width: 92px; }
.status button { height: 20px; padding: 0 9px; text-align: left; }
.status .held { background: #ababab; }
.status .snap { display: flex; align-items: center; gap: 12px; padding: 0 3px 0 9px; }
.mark { position: absolute; right: 8px; top: -20px; font: 700 21px/22px "Noto Sans CJK SC", sans-serif; color: #e6e6ee; text-shadow: 1px 0 #cfd4ec, -1px 0 #cfd4ec; opacity: .8; }
.taskbar { height: 8px; flex: none; display: flex; justify-content: space-between; overflow: hidden; background: linear-gradient(90deg, #1c4a7e, #27598f 15%, #17427c 40%, #2a6296 60%, #12407c 80%, #0d3a7a); border-top: 1px solid #10233c; }
.taskbar svg { width: 700px; height: 8px; }
.showdesk { width: 14px; height: 8px; margin-right: 1px; border: 1px solid #a8bcd4; background: #5a7ba6; }
```
